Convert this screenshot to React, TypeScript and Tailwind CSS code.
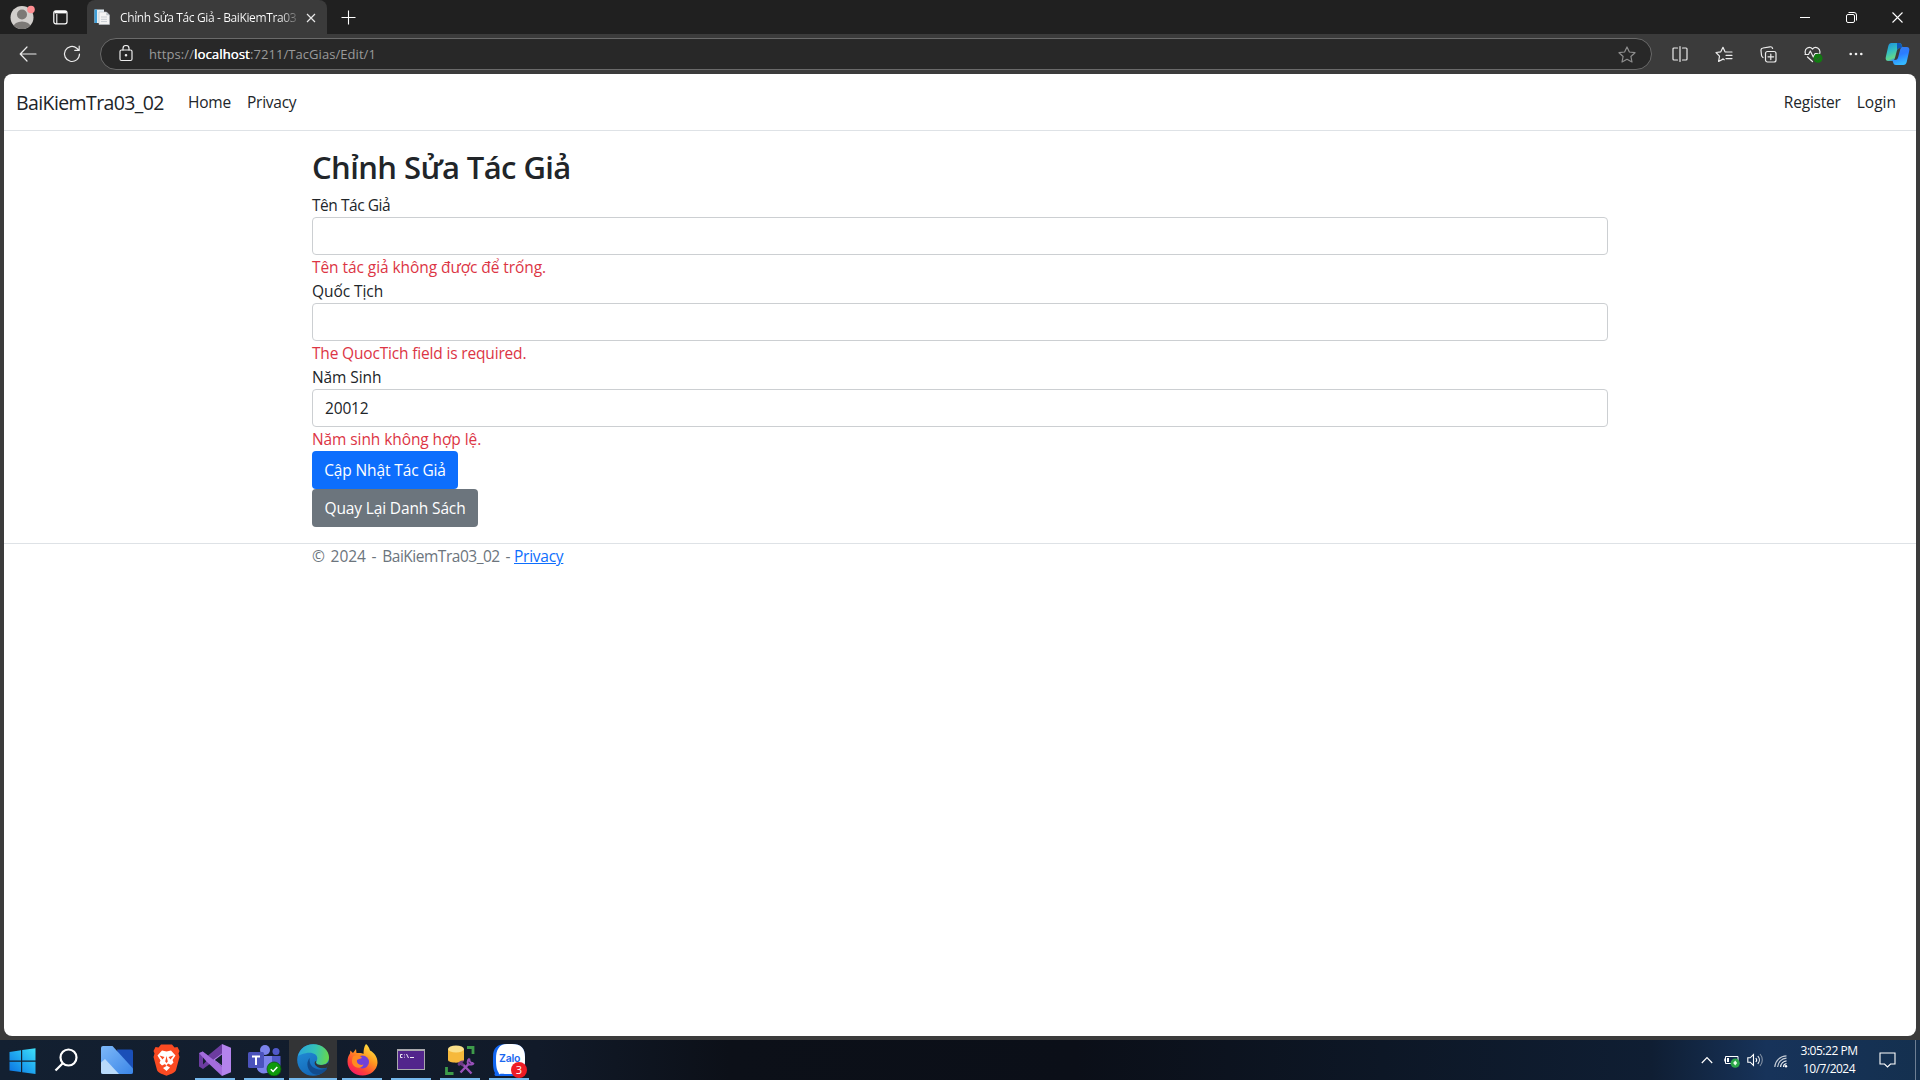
import type { ReactNode } from 'react';

function TabStrip() {
  return (
    <div className="flex h-[34px] shrink-0 items-stretch bg-[#202020] text-white">
      <div className="flex w-[87px] items-center">
        <svg className="ml-[10px] mt-[1px]" width="26" height="26" viewBox="0 0 26 26">
          <defs>
            <clipPath id="avatar">
              <circle cx="12" cy="12.5" r="11.5" />
            </clipPath>
          </defs>
          <circle cx="12" cy="12.5" r="11.5" fill="#d2cfcc" />
          <g clipPath="url(#avatar)" fill="#7c7976">
            <circle cx="12" cy="9.5" r="5" />
            <ellipse cx="12" cy="22" rx="8.5" ry="5.6" />
          </g>
          <circle cx="21" cy="4.5" r="3.8" fill="#ff8e92" />
        </svg>
        <svg className="ml-[17px]" width="15" height="15" viewBox="0 0 15 15" fill="none" stroke="#fff">
          <rect x="0.8" y="0.8" width="13.2" height="13" rx="2" strokeWidth="1.2" />
          <path d="M1.500 2.2h12" strokeWidth="2.400" />
          <path d="M3.8 4v10" strokeWidth="1.1" />
        </svg>
      </div>
      <div className="flex w-[240px] items-center rounded-t-lg bg-[#3b3b3b]">
        <svg className="ml-[7px]" width="16" height="16" viewBox="0 0 16 16">
          <path d="M0.500 0.500h9.500V14h-9.500z" fill="#e4eef5" />
          <path d="M0.500 0.500h2.500V14h-2.500z" fill="#3f9fd8" />
          <path d="M5 3h7.500l3 3V15.500H5z" fill="#f4f4f4" stroke="#b9c0c6" strokeWidth="0.6" />
          <path d="M12.300 3v3.200h3.200" fill="#b8c0c6" />
          <path d="M7 8h6M7 10.300h6M7 12.600h6" stroke="#c7cdd2" strokeWidth="1" />
        </svg>
        <div className="mt-px ml-[10px] w-[177px] overflow-hidden whitespace-nowrap bg-linear-to-r from-white from-90% to-white/20 bg-clip-text text-[12px] tracking-[-0.38px] text-transparent">
          Chỉnh Sửa Tác Giả - BaiKiemTra03
        </div>
        <svg className="mt-px ml-[9px]" width="10" height="10" viewBox="0 0 10 10" stroke="#e8e8e8" strokeWidth="1.2">
          <path d="M1 1l8 8M9 1l-8 8" />
        </svg>
      </div>
      <div className="flex items-center pl-[14px]">
        <svg width="15" height="15" viewBox="0 0 15 15" stroke="#fff" strokeWidth="1.1">
          <path d="M7.500 0.500v14M0.500 7.500h14" />
        </svg>
      </div>
      <div className="ml-auto flex items-center">
        <svg className="mr-[36px]" width="10" height="10" viewBox="0 0 10 10" stroke="#fff">
          <path d="M0 5.500h10" />
        </svg>
        <svg className="mr-[35px]" width="11" height="11" viewBox="0 0 11 11" fill="none" stroke="#fff">
          <rect x="0.500" y="2.500" width="8" height="8" rx="1.500" />
          <path d="M2.500 0.500h5.500a2.500 2.500 0 0 1 2.500 2.500v5.500" />
        </svg>
        <svg className="mr-[17px]" width="11" height="11" viewBox="0 0 11 11" stroke="#fff" strokeWidth="1.1">
          <path d="M0.500 0.500l10 10M10.500 0.500l-10 10" />
        </svg>
      </div>
    </div>
  );
}

function ToolbarCell({ children }: { children: ReactNode }) {
  return <div className="flex w-[44px] items-center justify-center">{children}</div>;
}

const line = { fill: 'none', stroke: '#ececec', strokeWidth: 1.2, strokeLinecap: 'round', strokeLinejoin: 'round' } as const;

function Toolbar() {
  return (
    <div className="flex h-[40px] shrink-0 items-center bg-[#3b3b3b]">
      <svg className="ml-[19px]" width="18" height="16" viewBox="0 0 18 16" {...line}>
        <path d="M17 8H1.500M8 1L1.200 8L8 15" />
      </svg>
      <svg className="ml-[26px]" width="18" height="18" viewBox="0 0 18 18" {...line}>
        <path d="M16.500 9a7.500 7.500 0 1 1-2.700-5.800L16 5.200M16.200 1v4.400h-4.400" />
      </svg>
      <div className="ml-[19px] flex h-[32px] w-[1552px] items-center rounded-full border border-[#6a6a6a] bg-[#282828] pb-px">
        <svg className="ml-[18px]" width="14" height="17" viewBox="0 0 14 17" {...line}>
          <rect x="1" y="5" width="12" height="10.500" rx="1.500" />
          <path d="M4 5V3.500a3 3 0 0 1 6 0V5" />
          <circle cx="7" cy="10.200" r="0.700" fill="#ececec" />
        </svg>
        <div className="mt-[2px] ml-[16px] flex text-[13px] text-[#9a9a9a]">
          <span className="w-[45px] tracking-[0.08px]">https://</span>
          <span className="w-[56px] tracking-[0.15px] text-white [text-shadow:0.3px_0_0_#fff]">localhost</span>
          <span className="tracking-[0.06px]">:7211/TacGias/Edit/1</span>
        </div>
        <svg className="mt-px mr-[15px] ml-auto" width="18" height="17" viewBox="0 0 18 17" {...line} stroke="#8d8d8d">
          <path d="M9 1l2.400 5 5.600.7-4.100 3.800 1.100 5.500L9 13.300 4 16l1.100-5.500L1 6.700 6.600 6z" />
        </svg>
      </div>
      <div className="ml-[6px] flex">
        <ToolbarCell>
          <svg width="16" height="16" viewBox="0 0 16 16" {...line}>
            <path d="M5.500 2H2a1 1 0 0 0-1 1v10a1 1 0 0 0 1 1h3.500M10.500 2H14a1 1 0 0 1 1 1v10a1 1 0 0 1-1 1h-3.500M8 0.600v14.800" />
          </svg>
        </ToolbarCell>
        <ToolbarCell>
          <svg width="18" height="17" viewBox="0 0 18 17" {...line}>
            <path d="M11.300 6L10 5.800 8 1.300 5.800 5.800 1 6.500l3.500 3.600-.9 5.400 4.400-2.400M11.500 6H17M11 9.300h6M11 12.600h6" />
            <path d="M8 13.100l1.200.7" />
          </svg>
        </ToolbarCell>
        <ToolbarCell>
          <svg width="17" height="17" viewBox="0 0 17 17" {...line}>
            <rect x="5.500" y="5.500" width="10.500" height="10.500" rx="2" />
            <path d="M10.800 8v5.600M8 10.800h5.600M3 11.500A3 3 0 0 1 1.500 9.200L1 4.500A2.300 2.300 0 0 1 3 2l7-1.200a2.300 2.300 0 0 1 2.600 1.700" />
          </svg>
        </ToolbarCell>
        <ToolbarCell>
          <svg className="ml-[2px]" width="19" height="17" viewBox="0 0 19 17" {...line}>
            <path d="M1.400 7.500C0 2.500 5.500-.5 8.500 3c3-3.500 8.500-.5 7.200 4.500M1 8.500h3.500L6.300 5l3 6 1.800-3.500h3M3.500 11l5 4.500" />
            <circle cx="14" cy="12.200" r="4.500" fill="#107c10" stroke="none" />
            <path d="M12 12.300l1.500 1.500 2.700-2.800" stroke="#2f5f2f" />
          </svg>
        </ToolbarCell>
        <ToolbarCell>
          <svg width="14" height="4" viewBox="0 0 14 4" fill="#f2f2f2">
            <circle cx="1.700" cy="2" r="1.300" />
            <circle cx="7" cy="2" r="1.300" />
            <circle cx="12.300" cy="2" r="1.300" />
          </svg>
        </ToolbarCell>
      </div>
      <svg className="ml-[7px]" width="25" height="24" viewBox="0 0 25 24">
        <defs>
          <linearGradient id="cpA" x1="0" y1="0" x2="0.400" y2="1">
            <stop offset="0" stopColor="#1a8fe0" />
            <stop offset="0.500" stopColor="#35bfc0" />
            <stop offset="0.850" stopColor="#63d78a" />
            <stop offset="1" stopColor="#2f8fe8" />
          </linearGradient>
          <linearGradient id="cpB" x1="0" y1="0" x2="0.300" y2="1">
            <stop offset="0" stopColor="#3a7fe8" />
            <stop offset="0.500" stopColor="#2b7bff" />
            <stop offset="1" stopColor="#35b8ff" />
          </linearGradient>
        </defs>
        <path d="M6.500 1H14c2 0 2.500 1.300 3 3l.6 2H15c-2 0-2.700 1.200-3.200 3l-2 7.500C9.200 18.500 8 19 6.500 19H3.300C.8 19 .3 17 .8 15L3.300 4C3.800 2 4.800 1 6.500 1z" fill="url(#cpA)" />
        <path d="M12 1h2c2 0 2.500 1.300 3 3l.6 2H15c-1.500 0-2.500.8-3 2.300z" fill="#0f57b8" />
        <path d="M18.500 23H11c-2 0-2.500-1.300-3-3l-.6-2H10c2 0 2.700-1.200 3.200-3l2-7.500c.6-2 1.800-2.500 3.300-2.500h3.200c2.500 0 3 2 2.500 4l-2.500 11c-.5 2-1.500 3-3.200 3z" fill="url(#cpB)" />
      </svg>
    </div>
  );
}

type FieldProps = { label: ReactNode; error: ReactNode; value?: string };

function Field({ label, error, value = '' }: FieldProps) {
  return (
    <div>
      <div className="h-[24px] leading-[24px]">{label}</div>
      <div className="flex h-[38px] items-center rounded border border-[#cccfd2] px-[12px] pt-[2px] tracking-[-0.16px]">{value}</div>
      <div className="h-[24px] leading-[24px] text-[#dc3545]">{error}</div>
    </div>
  );
}

function Page() {
  return (
    <div className="mx-[4px] mb-[4px] flex-1 overflow-hidden rounded-lg bg-white text-[15.5px] text-[#212529]">
      <nav className="flex h-[57px] items-center border-b border-[#dee2e6] pt-[2px] pl-[12px]">
        <span className="w-[172px] text-[19.5px] tracking-[-0.6px]">BaiKiemTra03_02</span>
        <span className="w-[59px] tracking-[-0.2px]">Home</span>
        <span className="tracking-[-0.25px]">Privacy</span>
        <span className="mr-[16px] ml-auto tracking-[-0.2px]">Register</span>
        <span className="mr-[20px]">Login</span>
      </nav>
      <main className="mx-auto mt-[16px] w-[1296px] pb-[16px]">
        <h1 className="mb-[7px] h-[39px] pt-px text-[31px] leading-[39px] font-semibold tracking-[-0.58px]">Chỉnh Sửa Tác Giả</h1>
        <Field
          label={<span className="tracking-[-0.46px]">Tên Tác Giả</span>}
          error={<span className="tracking-[-0.07px]">Tên tác giả không được để trống.</span>}
        />
        <Field label={<span className="tracking-[-0.06px]">Quốc Tịch</span>} error={<span className="tracking-[-0.17px]">The QuocTich field is required.</span>} />
        <Field label={<span className="tracking-[-0.1px]">Năm Sinh</span>} value="20012" error={<span className="tracking-[-0.09px]">Năm sinh không hợp lệ.</span>} />
        <div className="flex h-[38px] w-[146px] items-center justify-center rounded bg-[#0d6efd] pt-[2px] tracking-[-0.12px] whitespace-nowrap text-white">
          Cập Nhật Tác Giả
        </div>
        <div className="flex h-[38px] w-[166px] items-center justify-center rounded bg-[#6c757d] pt-[2px] tracking-[-0.14px] whitespace-nowrap text-white">
          Quay Lại Danh Sách
        </div>
      </main>
      <footer className="border-t border-[#dee2e6]">
        <div className="mx-auto flex h-[26px] w-[1296px] items-center text-[#6c757d]">
          <span className="w-[202px] whitespace-nowrap [word-spacing:1.6px]">
            © 2024 - <span className="tracking-[-0.48px]">BaiKiemTra03_02</span> -
          </span>
          <span className="tracking-[-0.25px] text-[#0d6efd] underline">Privacy</span>
        </div>
      </footer>
    </div>
  );
}

type TaskProps = { children: ReactNode; open?: boolean; active?: boolean };

function Task({ children, open, active }: TaskProps) {
  return (
    <div className={`mr-px flex h-[40px] w-[48px] flex-col items-center ${active ? 'bg-[#333436]' : ''}`}>
      <div className="flex h-[38px] items-center justify-center pt-[2px]">{children}</div>
      {open && <div className={`h-[2px] bg-[#76b9ed] ${active ? 'w-[48px]' : 'w-[40px]'}`} />}
    </div>
  );
}

function Taskbar() {
  return (
    <div className="flex h-[40px] shrink-0 items-center bg-[linear-gradient(90deg,#132031_0%,#111a29_28%,#0c1018_38%,#0b0f18_56%,#0d1726_72%,#0f1e33_86%,#17335a_92%,#14304f_100%)] text-white">
      <svg className="mt-[2px] ml-[9px]" width="27" height="27" viewBox="0 0 27 27">
        <defs>
          <linearGradient id="win" x1="0" y1="1" x2="1" y2="0">
            <stop offset="0" stopColor="#0a6fe0" />
            <stop offset="0.500" stopColor="#1fa8f0" />
            <stop offset="1" stopColor="#3fe0f8" />
          </linearGradient>
        </defs>
        <path d="M0.500 4L12 2.300V12.500H0.500zM13.200 2.100L26.500 0.300V12.500H13.200zM0.500 13.700H12v10.400L0.500 22.500zM13.200 13.700H26.500v12.400L13.200 24.300z" fill="url(#win)" />
      </svg>
      <svg className="ml-[18px]" width="24" height="24" viewBox="0 0 24 24" fill="none" stroke="#fff" strokeWidth="2.200">
        <circle cx="14.500" cy="9.500" r="8" />
        <path d="M8.800 15.200L1.500 22.500" />
      </svg>
      <div className="ml-[15px] flex">
        <Task>
          <svg width="32" height="28" viewBox="0 0 32 28">
            <defs>
              <linearGradient id="fl" x1="0" y1="0" x2="1" y2="1">
                <stop offset="0" stopColor="#7db8f8" />
                <stop offset="1" stopColor="#3b86e8" />
              </linearGradient>
            </defs>
            <path d="M16 3.500h14a2 2 0 0 1 2 2V26a2 2 0 0 1-2 2H20z" fill="#1a4fb8" />
            <path d="M0 2a2 2 0 0 1 2-2h9.500L32 22.500V26a2 2 0 0 1-2 2H2a2 2 0 0 1-2-2z" fill="url(#fl)" />
            <path d="M0 16.500l4-3.500 14 15H2a2 2 0 0 1-2-2z" fill="#b9dafa" />
          </svg>
        </Task>
        <Task>
          <svg className="ml-px" width="27" height="32" viewBox="0 0 27 32">
            <path d="M8 0.500h11l2.500 3 3-.5 2 4-1 2.500 1 3.500-3.500 13c-.5 2-4 4-9.500 5.700C8 30 4.500 28 4 26L.500 13l1-3.500-1-2.500 2-4 3 .500z" fill="#fb4a22" />
            <path d="M9 6.500l4.500 1 4.500-1 4.500 5-3 4.500 1 2.500-2.500 2.500-3-1.500-1.500 2 3.500 2-3.500 3.500L10 24l3.500-2-1.500-2-3 1.500L6.500 19l1-2.500-3-5z" fill="#fff" />
            <path d="M6.500 11.500l5 1.500-2 2.500zM20.500 11.500l-5 1.500 2 2.500zM13.500 12l1.300 5.500-1.300 1.500-1.300-1.500z" fill="#fb4a22" />
          </svg>
        </Task>
        <Task open>
          <svg width="32" height="32" viewBox="0 0 32 32">
            <path d="M0 9.500l3.500-2L9 11.500 23 0v11L4 25 0 22.500z" fill="#6c3ca0" />
            <path d="M4 11.500v9L8.500 16z" fill="#131f30" />
            <path d="M23 0l9 3.800v24.400L23 32V22.500L14 16l9-6.500z" fill="#b383ec" />
            <path d="M23 10.500v11L15.800 16z" fill="#131f30" />
            <path d="M0 9l3.800-1.500L23 22.500V32L7.500 17.500z" fill="#a36cdc" />
          </svg>
        </Task>
        <Task open>
          <svg className="ml-[2px]" width="34" height="32" viewBox="0 0 34 32">
            <circle cx="17" cy="6" r="5" fill="#7b83eb" />
            <circle cx="28" cy="7.500" r="3.500" fill="#5059c9" />
            <path d="M21 12h11.500v9a6 6 0 0 1-11.500 2z" fill="#5059c9" />
            <path d="M9 12h15v11a8 8 0 0 1-15 2z" fill="#7b83eb" />
            <rect x="0" y="8" width="16" height="16" rx="1.500" fill="#4b53bc" />
            <path d="M4 12.500h8M8 12.500v8.500" stroke="#fff" strokeWidth="2" />
            <circle cx="26" cy="25" r="7" fill="#0f9a0c" stroke="#0b5c0a" strokeWidth="0.800" />
            <path d="M22.800 25.200l2.300 2.300 4.200-4.500" fill="none" stroke="#fff" strokeWidth="1.500" />
          </svg>
        </Task>
        <Task open active>
          <svg width="32" height="32" viewBox="0 0 32 32">
            <defs>
              <linearGradient id="eA" x1="0" y1="0.300" x2="1" y2="0.400">
                <stop offset="0" stopColor="#2aa5dd" />
                <stop offset="0.550" stopColor="#35c3b5" />
                <stop offset="1" stopColor="#66d84e" />
              </linearGradient>
              <linearGradient id="eB" x1="0" y1="0" x2="0.400" y2="1">
                <stop offset="0" stopColor="#2493dc" />
                <stop offset="1" stopColor="#1468b8" />
              </linearGradient>
            </defs>
            <circle cx="16" cy="16" r="15.800" fill="url(#eB)" />
            <path d="M1 12C3 4.500 9 .2 16.500.2 25.500.2 32 6.500 32 13.500c0 5-4 7.500-8 7.500-3.500 0-5-1.500-5-2.800 0-1 1.300-1.500 1.300-4C20.300 11 17 8.700 12.500 8.700 7.500 8.700 3 11 1 12z" fill="url(#eA)" />
            <path d="M12.800 14C9 18 9.500 25.500 15.500 29.500c5.500 3 12-.5 14.500-4.500.5-.8-.3-1.200-1-.8-6 3-14 .8-16-5.200-.5-2-.5-3.500-.2-5z" fill="#124c8e" />
            <path d="M32 17.500c-1.500 2.500-4.500 3.500-8 3.500-3.500 0-5-1.500-5-2.800 0-.5.300-.9.600-1.500-2.300.5-2.500 3-.6 5 3 3 8.500 3.300 11.500 1.500z" fill="#333436" />
          </svg>
        </Task>
        <Task open>
          <svg width="31" height="32" viewBox="0 0 31 32">
            <defs>
              <linearGradient id="ff" x1="0.850" y1="0" x2="0.200" y2="1">
                <stop offset="0" stopColor="#fff04a" />
                <stop offset="0.400" stopColor="#ff9a1f" />
                <stop offset="0.750" stopColor="#ff4038" />
                <stop offset="1" stopColor="#f5136f" />
              </linearGradient>
            </defs>
            <path d="M19 0c2 1.500 3.500 4 4 6.500 4 2 7.800 6.500 7.500 12.500C30 26 23.500 31.500 15.500 31.500 7 31.500.500 25.500.500 17.500c0-3.500 1.200-6.500 2.500-8l.3-3L6 9l3-4 .500 4c3 0 5-.5 7 1 0-4 .5-7.500 2.500-10z" fill="url(#ff)" />
            <circle cx="15.500" cy="18" r="6.500" fill="#7141d8" />
            <path d="M6 12.500c3-2 7-1.500 9 1.500-2 1-4 1-5 2-.8 3.500 3 6 6.500 4.500-2 5-9 4-11-.5-1-2.500-.5-5.500.500-7.500z" fill="#ff8a22" />
          </svg>
        </Task>
        <Task open>
          <svg className="-mt-px" width="28" height="21" viewBox="0 0 28 21">
            <rect x="0.500" y="0.500" width="27" height="20" fill="#52258c" stroke="#a9a9ad" />
            <path d="M1 1.500h26" stroke="#a9a9ad" />
            <g fill="none" stroke="#fff" strokeWidth="0.900">
              <path d="M5.500 5.500H3.500v3h2M7.500 5.500v.8M7.500 7.800v.8M9.500 5l2 4M13 8.500h4" />
            </g>
          </svg>
        </Task>
        <Task open>
          <svg width="30" height="31" viewBox="0 0 30 31">
            <path d="M3 4v11c0 3.500 16 3.500 16 0V4z" fill="#f6b93c" />
            <ellipse cx="11" cy="4" rx="8" ry="3.500" fill="#fbe08a" />
            <path d="M22 2.500h6V9M1.500 22v6.500h7" fill="none" stroke="#3e9b4a" strokeWidth="2.800" />
            <path d="M15.500 27.500L23.500 19M18 19.500l8.500 9" fill="none" stroke="#9850b8" strokeWidth="2.400" />
            <path d="M12.500 19.500c.5-2.500 3-4.500 6.500-4l-1.500 2 2 2-2 2-2-1.500-1.500 1z" fill="#6d3a86" />
            <path d="M24.500 13.500a3.500 3.500 0 0 0 4 4.500M24.500 13.500c-2.500 1.500-2.500 5.500 0 6 2 .5 4-.2 4-1.500" fill="none" stroke="#9850b8" strokeWidth="1.900" />
          </svg>
        </Task>
        <Task open>
          <div className="relative h-[32px] w-[36px]">
            <svg className="ml-[2px]" width="32" height="32" viewBox="0 0 32 32">
              <path d="M13 0h6c9 0 13 4 13 13v6c0 9-4 13-13 13H3.500c-2 0-2.500-1.500-1.500-3 0 0-2-3-2-10v-6C0 4 4 0 13 0z" fill="#1266f1" />
              <path d="M14 0h5c9 0 13 4 13 13v5c0 8-5 12-13 12h-6c-3 0-4.500-.5-6 0-1 .4-1.500.2-1-.8C3.500 26 3 22 3 15 3 6 6 0 14 0z" fill="#fff" />
            </svg>
            <span className="absolute top-[7px] left-[8px] font-['Inter'] text-[10.5px] leading-[16px] font-semibold tracking-[-0.2px] text-[#1a66f0]">Zalo</span>
            <span className="absolute top-[18px] left-[20px] flex size-[16px] items-center justify-center rounded-full bg-[#ee1c25] text-[11px] leading-[16px]">3</span>
          </div>
        </Task>
      </div>
      <div className="ml-auto flex items-center">
        <svg width="12" height="8" viewBox="0 0 12 8" fill="none" stroke="#fff" strokeWidth="1.200">
          <path d="M0.800 7L6 1.500 11.200 7" />
        </svg>
        <svg className="mt-[3px] ml-[11px]" width="16" height="13" viewBox="0 0 16 13" fill="none" stroke="#fff">
          <path d="M1.500 1.500h12.500v7h-12.500z" />
          <path d="M1 3.500v3" strokeWidth="1.500" />
          <path d="M4 3v4" strokeWidth="2" />
          <circle cx="11.200" cy="8.200" r="4.600" fill="#2ca84a" stroke="none" />
          <path d="M11.200 5.600l2 2.500-2 2.300-2-2.300z" fill="#e8ffe8" stroke="none" />
        </svg>
        <svg className="ml-[7px]" width="17" height="14" viewBox="0 0 17 14" fill="none" stroke="#fff" strokeWidth="1.100">
          <path d="M0.800 4.800h2.400L6.500 1.500v11L3.200 9.200H0.800z" />
          <path d="M8.800 5a3 3 0 0 1 0 4M10.800 3a6 6 0 0 1 0 8" />
          <path d="M13 1a9 9 0 0 1 0 12" stroke="#8492a4" />
        </svg>
        <svg className="mt-[2px] ml-[10px]" width="14" height="13" viewBox="0 0 14 13" fill="none" stroke="#f0f3f6" strokeWidth="1.200">
          <path d="M9.500 12A3.500 3.500 0 0 1 12.500 8.500M6.600 12A6.500 6.500 0 0 1 12.500 5.800" />
          <path d="M3.600 12A9.500 9.500 0 0 1 12.500 3.200M0.800 12A12 12 0 0 1 12.500 0.800" stroke="#c3cbd5" />
          <circle cx="12" cy="11.300" r="1.200" fill="#fff" stroke="none" />
        </svg>
        <div className="ml-[11px] w-[60px] text-center text-[12px] leading-[18px] whitespace-nowrap">
          <div className="tracking-[-0.48px]">3:05:22 PM</div>
          <div className="tracking-[-0.54px]">10/7/2024</div>
        </div>
        <svg className="ml-[20px]" width="17" height="16" viewBox="0 0 17 16" fill="none" stroke="#fff" strokeWidth="1.100">
          <path d="M1 1h15v11h-4.500L8.500 15l-3-3H1z" />
        </svg>
        <div className="mr-[4px] ml-[19px] h-[40px] w-px bg-[#6d7f94]" />
      </div>
    </div>
  );
}

export default function App() {
  return (
    <div className="flex h-screen w-full flex-col overflow-hidden bg-[#3b3b3b] font-['Open_Sans',sans-serif]">
      <TabStrip />
      <Toolbar />
      <Page />
      <Taskbar />
    </div>
  );
}
